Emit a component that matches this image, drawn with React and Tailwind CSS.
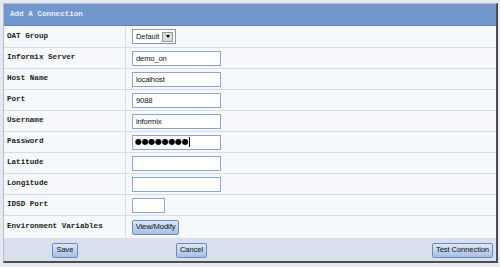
import React from 'react';

const rows = [
  { label: 'OAT Group', kind: 'select' },
  { label: 'Informix Server', kind: 'input', value: 'demo_on' },
  { label: 'Host Name', kind: 'input', value: 'localhost' },
  { label: 'Port', kind: 'input', value: '9088' },
  { label: 'Username', kind: 'input', value: 'informix' },
  { label: 'Password', kind: 'password' },
  { label: 'Latitude', kind: 'input', value: '' },
  { label: 'Longitude', kind: 'input', value: '' },
  { label: 'IDSD Port', kind: 'short', value: '' },
  { label: 'Environment Variables', kind: 'button' },
];

function Btn({ children, className = '' }) {
  return (
    <button
      className={`h-[15px] px-[1px] border border-[#6b8cc2] rounded-[2px] bg-gradient-to-b from-[#dce7f7] to-[#a8bfe5] text-[7.6px] leading-none whitespace-nowrap tracking-[-0.1px] text-[#111] font-['Liberation_Sans',Arial,sans-serif] flex items-center justify-center ${className}`}
    >
      {children}
    </button>
  );
}

function Field({ row }) {
  if (row.kind === 'select') {
    return (
      <div className="w-[44px] h-[15px] border border-[#7f9db9] bg-white flex items-center justify-between pl-[3px] pr-[2px]">
        <span className="text-[7.4px] leading-none text-[#111]">Default</span>
        <span className="w-[11px] h-[10px] bg-[#dcdcdc] border border-[#9a9a9a] flex items-center justify-center">
          <span className="w-0 h-0 border-l-[2.5px] border-r-[2.5px] border-t-[3px] border-l-transparent border-r-transparent border-t-black" />
        </span>
      </div>
    );
  }
  if (row.kind === 'password') {
    return (
      <div className="w-[89px] h-[15px] border border-[#8aa6d2] bg-white flex items-center pl-[2px]">
        <span className="text-[8px] leading-none tracking-[-0.3px] text-black font-['DejaVu_Sans',sans-serif]">●●●●●●●●</span>
        <span className="w-[1px] h-[10px] bg-black ml-[1px]" />
      </div>
    );
  }
  if (row.kind === 'button') {
    return <Btn className="w-[47px]">View/Modify</Btn>;
  }
  return (
    <input
      readOnly
      value={row.value}
      className={`${row.kind === 'short' ? 'w-[33px]' : 'w-[89px]'} h-[15px] border border-[#8aa6d2] bg-white px-[3px] text-[7.6px] tracking-[-0.15px] text-[#111] outline-none`}
    />
  );
}

export default function App() {
  return (
    <div className="w-[500px] h-[267px] bg-[#e6e9ef] pt-[3px] pl-[3px] font-['Liberation_Sans',Arial,sans-serif]">
      <div className="w-[495px] border-l border-t border-[#b3c0d4] border-r-2 border-b-2 border-r-[#4d4d4d] border-b-[#4d4d4d] bg-[#f6f8fc]">
        <div className="h-[22px] bg-[#7197cc] border-b border-[#5b7fb6] flex items-center pl-[6px]">
          <span className="text-[7.6px] font-bold text-[#e8eef9] font-['Liberation_Mono','Courier_New',monospace]">
            Add A Connection
          </span>
        </div>
        {rows.map((row, i) => (
          <div
            key={row.label}
            className={`grid grid-cols-[122px_1fr] border-b border-[#d6dde9] ${i === 0 ? 'h-[22px]' : i === rows.length - 1 ? 'h-[23px]' : 'h-[21px]'}`}
          >
            <div className="flex items-center pl-[3px] border-r border-[#d6dde9]">
              <span className="text-[7.6px] font-bold text-[#1c1c1c] font-['Liberation_Mono','Courier_New',monospace] whitespace-pre">
                {row.label}
              </span>
            </div>
            <div className="flex items-center pl-[6px]">
              <Field row={row} />
            </div>
          </div>
        ))}
        <div className="h-[22px] bg-[#d8e0ed] flex items-center">
          <div className="w-[122px] flex justify-center">
            <Btn className="w-[26px]">Save</Btn>
          </div>
          <div className="w-[131px] flex justify-center">
            <Btn className="w-[31px]">Cancel</Btn>
          </div>
          <div className="flex-1 flex justify-end pr-[3px]">
            <Btn className="w-[61px]">Test Connection</Btn>
          </div>
        </div>
      </div>
    </div>
  );
}
